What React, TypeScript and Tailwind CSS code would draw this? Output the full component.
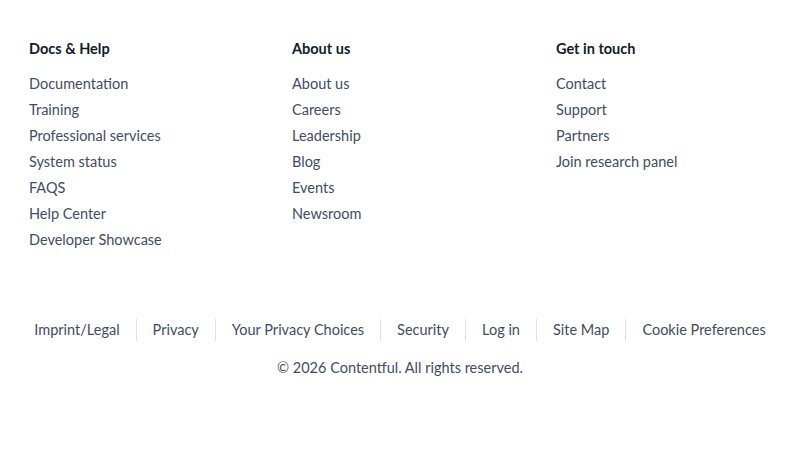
import React from 'react'

const columns = [
  {
    title: 'Docs & Help',
    links: ['Documentation', 'Training', 'Professional services', 'System status', 'FAQS', 'Help Center', 'Developer Showcase'],
  },
  {
    title: 'About us',
    links: ['About us', 'Careers', 'Leadership', 'Blog', 'Events', 'Newsroom'],
  },
  {
    title: 'Get in touch',
    links: ['Contact', 'Support', 'Partners', 'Join research panel'],
  },
]

const legal = ['Imprint/Legal', 'Privacy', 'Your Privacy Choices', 'Security', 'Log in', 'Site Map', 'Cookie Preferences']

function App() {
  return (
    <div className="w-[800px] h-[465px] bg-white font-['Lato','Noto_Sans',sans-serif] text-[#414d63]">
      <div className="grid grid-cols-[263px_264px_1fr] px-[29px] pt-[39px]">
        {columns.map((col) => (
          <div key={col.title}>
            <h3 className="text-[14.5px] font-bold leading-5 text-[#111b2b]">{col.title}</h3>
            <ul className="mt-[12px]">
              {col.links.map((l) => (
                <li key={l} className="text-[14.5px] leading-[26px]">{l}</li>
              ))}
            </ul>
          </div>
        ))}
      </div>

      <div className="mt-[66px] flex justify-center items-center">
        {legal.map((l, i) => (
          <div key={l} className={`px-4 h-[22px] flex items-center text-[14.5px] ${i > 0 ? 'border-l border-[#dbe3ea]' : ''}`}>
            {l}
          </div>
        ))}
      </div>
      <p className="mt-[17px] text-center text-[14.5px] leading-5">© 2026 Contentful. All rights reserved.</p>
    </div>
  )
}

export default App
